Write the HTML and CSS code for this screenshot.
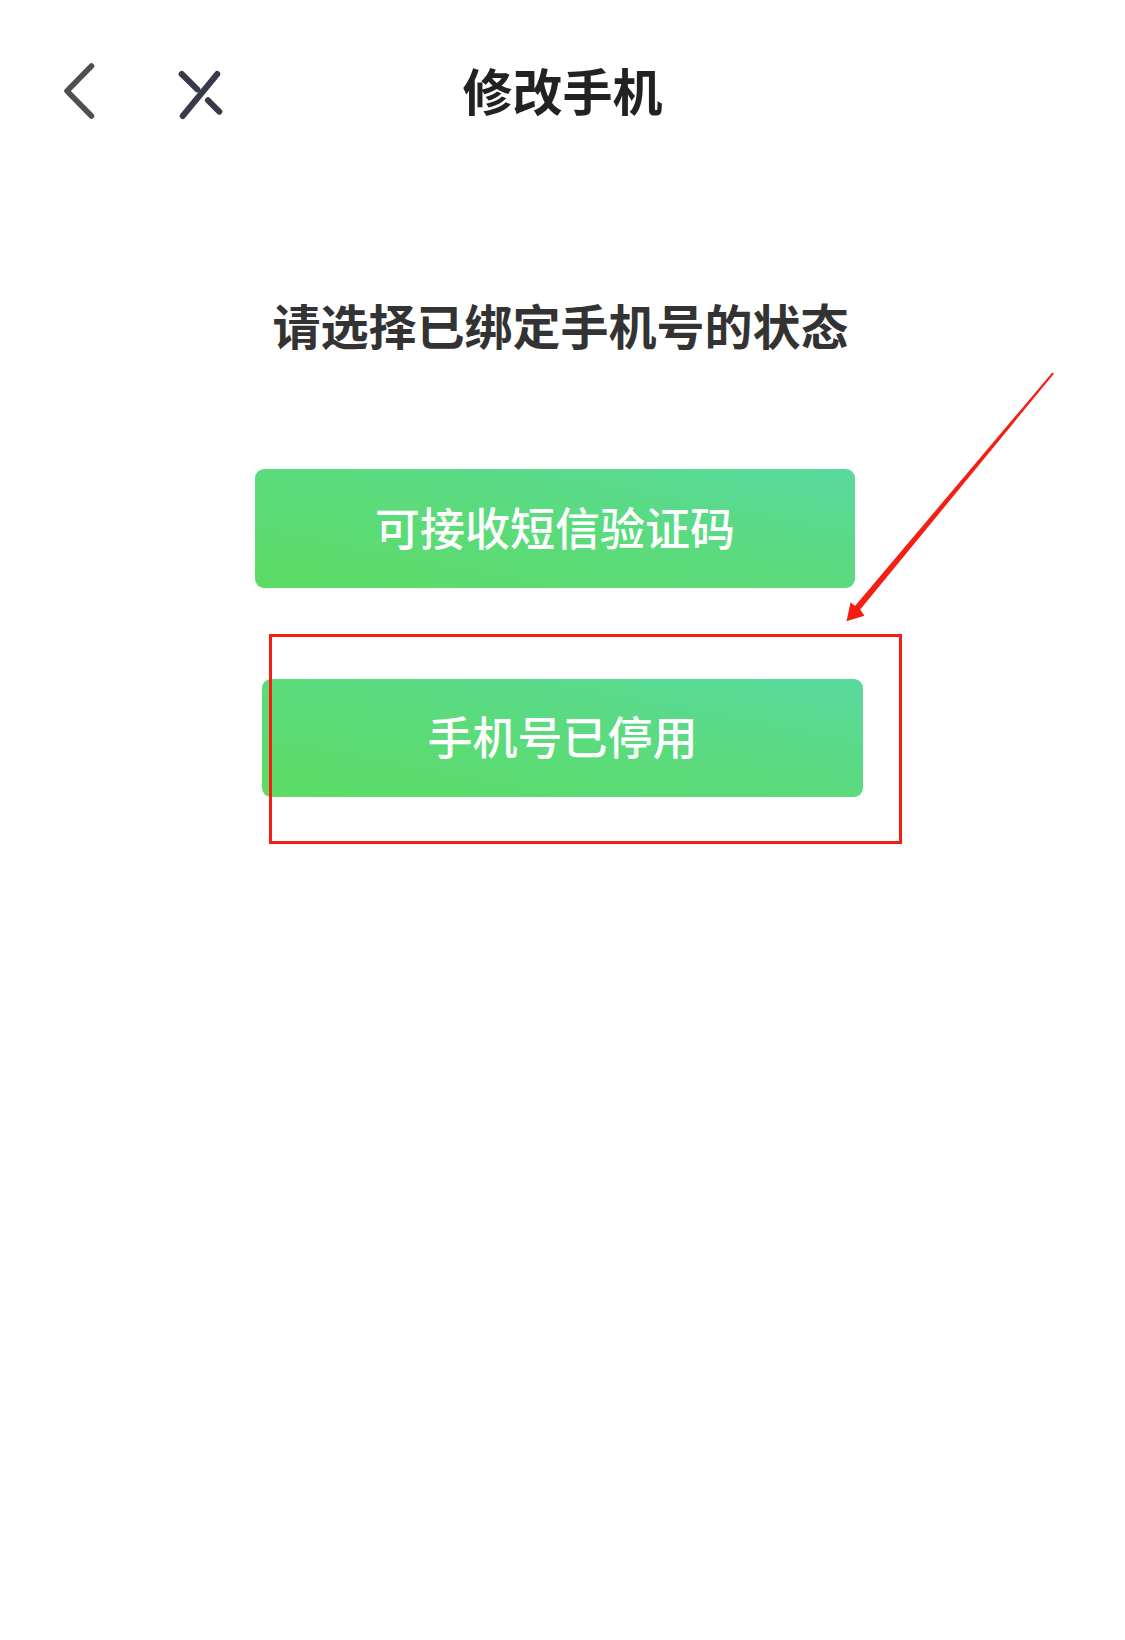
FILE: index.html
```html
<!DOCTYPE html>
<html lang="zh-CN">
<head>
<meta charset="utf-8">
<title>修改手机</title>
<link rel="stylesheet" href="styles.css">
</head>
<body>
<div class="page">
  <header class="header">
    <div class="nav-left">
      <svg class="icon-back" width="34" height="60" viewBox="0 0 34 60">
        <polyline points="29.5,5 5,30 29.5,55" fill="none" stroke="#4f4f4f" stroke-width="5.5" stroke-linecap="round" stroke-linejoin="round"/>
      </svg>
      <svg class="icon-close" width="48" height="60" viewBox="0 0 48 60">
        <g fill="none" stroke="#383a47" stroke-width="6" stroke-linecap="round">
          <line x1="41.3" y1="13" x2="6.7" y2="55"/>
          <line x1="5.7" y1="13" x2="21.3" y2="28.3"/>
          <line x1="32" y1="39.3" x2="43.3" y2="50.7"/>
        </g>
      </svg>
    </div>
    <h1 class="title">修改手机</h1>
    <div class="nav-right"></div>
  </header>

  <main class="content">
    <h2 class="prompt">请选择已绑定手机号的状态</h2>
    <div class="actions">
      <button class="btn btn-sms" type="button">可接收短信验证码</button>
      <button class="btn btn-stopped" type="button">手机号已停用</button>
    </div>
  </main>

  <div class="mark-box"></div>
  <svg class="mark-arrow" width="1125" height="1640" viewBox="0 0 1125 1640">
    <path d="M1052.3,372.4 L1053.9,373.7 L860.2,609.6 L864.4,615.8 L846.5,621.2 L850.6,602.2 L855.0,606.0 Z" fill="#f51e12"/>
  </svg>
</div>
</body>
</html>
```

FILE: styles.css
```css
html, body {
  margin: 0;
  padding: 0;
  background: #ffffff;
}

body {
  font-family: "Noto Sans CJK SC", "Noto Sans", sans-serif;
}

.page {
  position: relative;
  width: 1125px;
  height: 1640px;
  overflow: hidden;
  background: #ffffff;
}

.header {
  height: 182px;
  display: grid;
  grid-template-columns: 1fr auto 1fr;
  align-items: center;
}

.nav-left {
  display: flex;
  align-items: center;
  gap: 80px;
  padding-left: 62px;
}

.icon-back,
.icon-close {
  display: block;
  flex: none;
}

.title {
  margin: 0 0 4px 0;
  font-size: 50px;
  line-height: 60px;
  font-weight: 700;
  color: #222222;
  letter-spacing: 0;
}

.content {
  display: flex;
  flex-direction: column;
}

.prompt {
  margin: 114px 0 0 0;
  text-align: center;
  font-size: 48px;
  line-height: 56px;
  font-weight: 700;
  color: #333333;
  padding-right: 4px;
}

.actions {
  display: flex;
  flex-direction: column;
  align-items: flex-start;
  gap: 91px;
  margin-top: 117px;
}

.btn {
  display: flex;
  align-items: center;
  justify-content: center;
  border: none;
  border-radius: 9px;
  padding: 0 0 5px 0;
  font-family: "Noto Sans CJK SC", "Noto Sans", sans-serif;
  font-size: 45px;
  font-weight: 500;
  color: #ffffff;
  background: linear-gradient(to top right, #5cdc64 0%, #5bdb7c 50%, #58d99e 100%);
}

.btn-sms {
  margin-left: 255px;
  width: 600px;
  height: 119px;
}

.btn-stopped {
  margin-left: 262px;
  width: 601px;
  height: 118px;
}

.mark-box {
  position: absolute;
  left: 269px;
  top: 634px;
  width: 633px;
  height: 210px;
  box-sizing: border-box;
  border: 3px solid #f51e12;
  pointer-events: none;
}

.mark-arrow {
  position: absolute;
  left: 0;
  top: 0;
  pointer-events: none;
}
```
